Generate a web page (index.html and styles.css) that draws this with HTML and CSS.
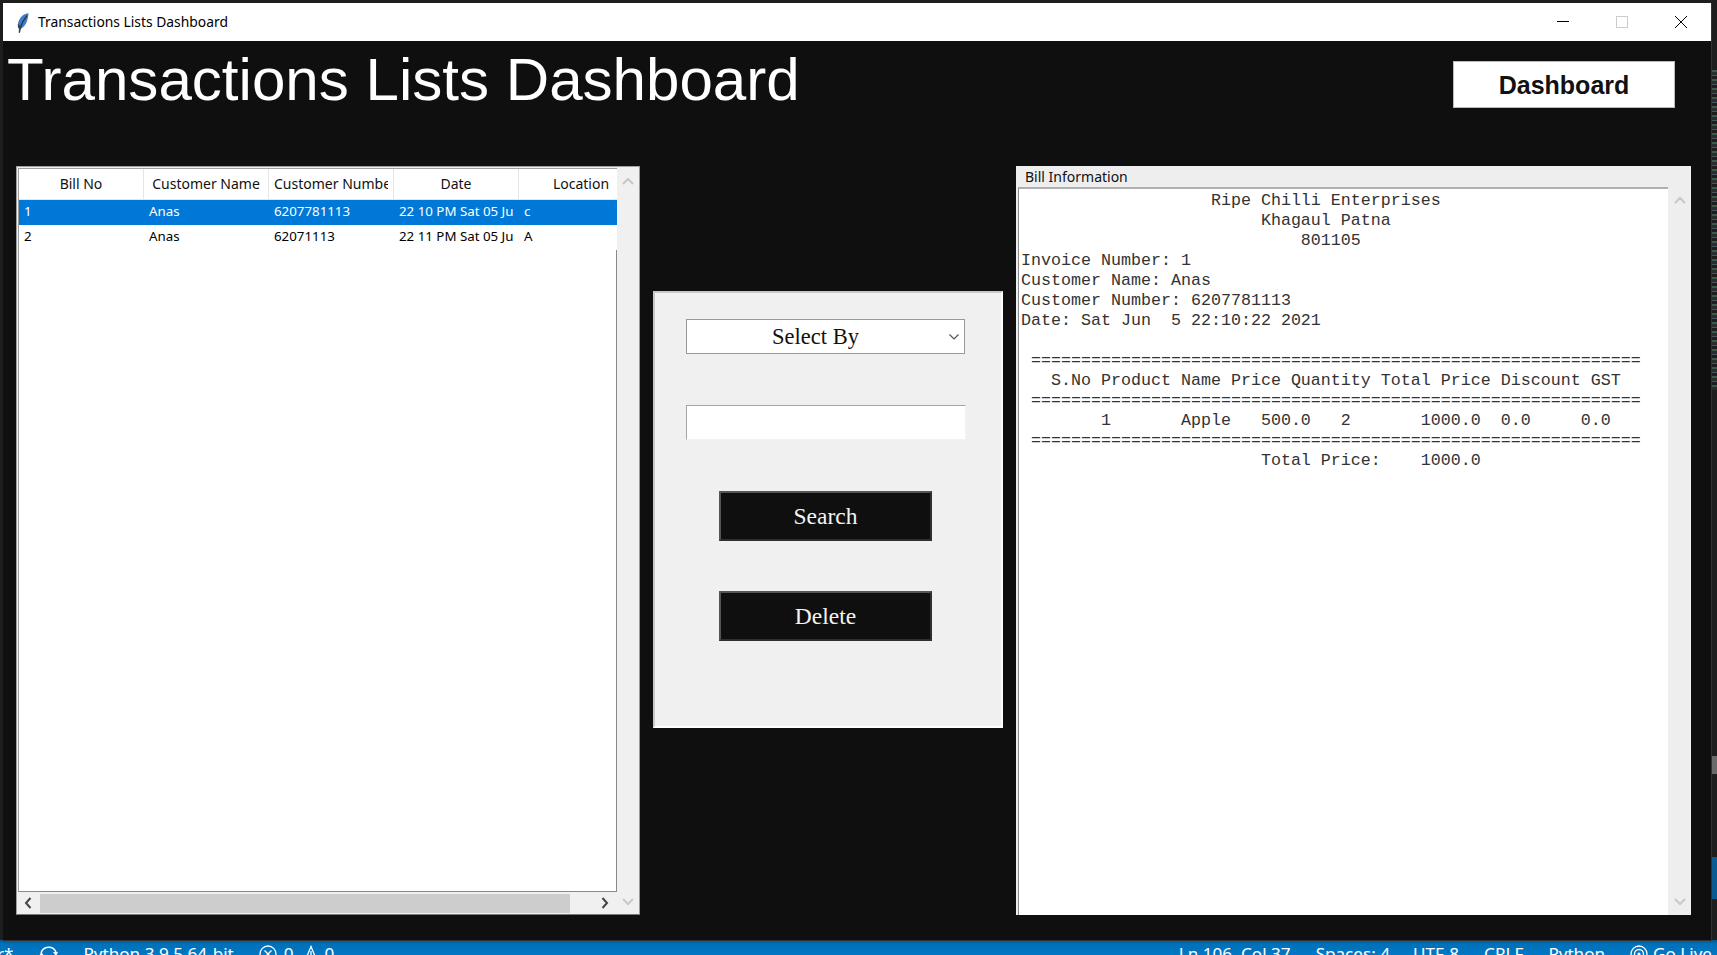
FILE: index.html
```html
<!DOCTYPE html>
<html lang="en">
<head>
<meta charset="utf-8">
<title>Transactions Lists Dashboard</title>
<link rel="stylesheet" href="styles.css">
</head>
<body>
<div class="desktop">
  <div class="minimap"></div>
  <div class="side-gray"></div>
  <div class="side-blue"></div>

  <footer class="statusbar">
    <div class="status-left">
      <span class="st-branch">r*</span>
      <svg class="st-sync" viewBox="0 0 21 21" width="21" height="21"><path d="M3 9a8 8 0 0 1 15 -1M18 14a8 8 0 0 1 -15 1" fill="none" stroke="#fff" stroke-width="1.5"/><path d="M1 12l5 0l-2.500 -4zM15 8l5 0l-2 4z" fill="#fff"/></svg>
      <span class="st-python">Python 3.9.5 64-bit</span>
      <svg class="st-err" viewBox="0 0 18 18" width="18" height="18"><circle cx="9" cy="9" r="8" fill="none" stroke="#fff" stroke-width="1.300"/><path d="M5.500 5.500l7 7M12.500 5.500l-7 7" stroke="#fff" stroke-width="1.300"/></svg>
      <span class="st-count">0</span>
      <svg class="st-warn" viewBox="0 0 14 18" width="14" height="18"><path d="M7 1.500L13 16H1z" fill="none" stroke="#fff" stroke-width="1.300"/><path d="M7 6v6" stroke="#fff" stroke-width="1.300"/></svg>
      <span class="st-count">0</span>
    </div>
    <div class="status-right">
      <span class="st-ln">Ln 106, Col 37</span>
      <span class="st-item">Spaces: 4</span>
      <span class="st-item st-utf">UTF-8</span>
      <span class="st-item">CRLF</span>
      <span class="st-item">Python</span>
      <svg class="st-live" viewBox="0 0 18 18" width="18" height="18"><circle cx="9" cy="9" r="8" fill="none" stroke="#fff" stroke-width="1.300"/><circle cx="9" cy="9" r="4.500" fill="none" stroke="#fff" stroke-width="1.300"/><circle cx="9" cy="9" r="1.500" fill="#fff"/></svg>
      <span class="st-golive">Go Live</span>
    </div>
  </footer>

  <div class="window">
    <header class="titlebar">
      <svg class="feather" viewBox="0 0 12 20" width="12" height="20"><path d="M11.500 0.300C6.500 0.800 2.200 4.500 1 10.500C0.600 12.800 0.900 14.500 2 15.700L1.800 19.800L3 19.800L3.600 15.800C8 14.500 11 8 11.500 0.300Z" fill="#3f7cc4"/><path d="M10 2.500C7 6 4.500 10.500 2.800 16" fill="none" stroke="#12233a" stroke-width="1.100"/><path d="M1 11C0.700 13 1 14.500 2 15.700L1.800 19.800L3 19.800L3.600 15.800L5 14z" fill="#39424e"/></svg>
      <span class="window-title">Transactions Lists Dashboard</span>
      <div class="controls">
        <svg class="ctl" viewBox="0 0 12 12" width="12" height="12"><path d="M0 5.500H12" stroke="#000" stroke-width="1"/></svg>
        <svg class="ctl" viewBox="0 0 12 12" width="12" height="12"><rect x="0.500" y="0.500" width="11" height="11" fill="none" stroke="#ccc"/></svg>
        <svg class="ctl" viewBox="0 0 12 12" width="12" height="12"><path d="M0 0L12 12M12 0L0 12" stroke="#000" stroke-width="1"/></svg>
      </div>
    </header>

    <main class="client">
      <section class="banner">
        <h1 class="heading">Transactions Lists Dashboard</h1>
        <button class="dash-btn" type="button">Dashboard</button>
      </section>

      <section class="panels">
        <div class="list-panel">
          <div class="tree">
            <div class="tree-row tree-head">
              <div class="th">Bill No</div>
              <div class="th">Customer Name</div>
              <div class="th">Customer Number</div>
              <div class="th">Date</div>
              <div class="th">Location</div>
            </div>
            <div class="tree-row tree-item selected">
              <div class="td">1</div>
              <div class="td">Anas</div>
              <div class="td">6207781113</div>
              <div class="td">22 10 PM Sat 05 Jun</div>
              <div class="td">c</div>
            </div>
            <div class="tree-row tree-item">
              <div class="td">2</div>
              <div class="td">Anas</div>
              <div class="td">62071113</div>
              <div class="td">22 11 PM Sat 05 Jun</div>
              <div class="td">A</div>
            </div>
            <div class="tree-fill"></div>
          </div>
          <div class="vscroll">
            <svg viewBox="0 0 12 8" width="12" height="8"><path d="M1 7L6 2L11 7" fill="none" stroke="#c8c8c8" stroke-width="2"/></svg>
            <svg viewBox="0 0 12 8" width="12" height="8"><path d="M1 1L6 6L11 1" fill="none" stroke="#c8c8c8" stroke-width="2"/></svg>
          </div>
          <div class="hscroll">
            <svg class="h-arrow" viewBox="0 0 8 12" width="8" height="12"><path d="M6.500 1L2 6L6.500 11" fill="none" stroke="#444" stroke-width="2"/></svg>
            <div class="h-thumb"></div>
            <svg class="h-arrow" viewBox="0 0 8 12" width="8" height="12"><path d="M1.500 1L6 6L1.500 11" fill="none" stroke="#444" stroke-width="2"/></svg>
          </div>
        </div>

        <div class="search-panel">
          <div class="select-box">
            <span class="select-label">Select By</span>
            <svg class="chevron" viewBox="0 0 10 6" width="10" height="6"><path d="M0.500 0.500L5 5L9.500 0.500" fill="none" stroke="#555" stroke-width="1.200"/></svg>
          </div>
          <input class="search-input" type="text" aria-label="Search value">
          <button class="dark-btn search-btn" type="button">Search</button>
          <button class="dark-btn delete-btn" type="button">Delete</button>
        </div>

        <div class="bill-panel">
          <div class="bill-label">Bill Information</div>
          <pre class="bill-text">                   Ripe Chilli Enterprises
                        Khagaul Patna
                            801105
Invoice Number: 1
Customer Name: Anas
Customer Number: 6207781113
Date: Sat Jun  5 22:10:22 2021

 =============================================================
   S.No Product Name Price Quantity Total Price Discount GST
 =============================================================
        1       Apple   500.0   2       1000.0  0.0     0.0
 =============================================================
                        Total Price:    1000.0</pre>
          <div class="bill-scroll">
            <svg viewBox="0 0 12 8" width="12" height="8"><path d="M1 7L6 2L11 7" fill="none" stroke="#c8c8c8" stroke-width="2"/></svg>
            <svg viewBox="0 0 12 8" width="12" height="8"><path d="M1 1L6 6L11 1" fill="none" stroke="#c8c8c8" stroke-width="2"/></svg>
          </div>
        </div>
      </section>
    </main>
  </div>
</div>
</body>
</html>
```
FILE: styles.css
```css
* { box-sizing: border-box; }
html, body { margin: 0; padding: 0; }
body { background: #1e1e1e; overflow: hidden; }

.desktop {
  position: relative;
  width: 1717px;
  height: 955px;
  overflow: hidden;
  background: #1e1e1e;
}
.minimap {
  position: absolute;
  left: 1712px;
  top: 70px;
  width: 5px;
  height: 320px;
  background: repeating-linear-gradient(180deg, #3c5a48 0 2px, #2a2d30 2px 5px, #4a5560 5px 6px, #1e1e1e 6px 9px);
}
.side-gray {
  position: absolute;
  left: 1712px;
  top: 756px;
  width: 5px;
  height: 18px;
  background: #6a6a6a;
}
.side-blue {
  position: absolute;
  left: 1712px;
  top: 857px;
  width: 5px;
  height: 42px;
  background: #0a5a94;
}

/* VS Code status bar behind the app window */
.statusbar {
  position: absolute;
  left: 0;
  right: 0;
  bottom: 0;
  height: 15px;
  overflow: hidden;
  display: flex;
  justify-content: space-between;
  background: linear-gradient(180deg, #01578f 0, #0170b8 4px, #0078c6 100%);
  color: #fff;
  font: 17.100px/22px "Noto Sans", sans-serif;
}
.status-left, .status-right {
  display: flex;
  align-items: flex-start;
  padding-top: 3px;
  white-space: nowrap;
}
.st-branch { margin-left: -3px; }
.st-sync { margin-left: 25px; margin-top: 1px; }
.st-python { margin-left: 24px; }
.st-err { margin-left: 25px; margin-top: 2px; }
.st-count { margin-left: 7px; }
.st-warn { margin-left: 10px; margin-top: 2px; }
.status-right { margin-right: 5px; }
.st-item { margin-left: 25px; }
.st-item.st-utf { margin-left: 23px; }
.st-live { margin-left: 25px; margin-top: 2px; }
.st-golive { margin-left: 5px; }

.window {
  position: absolute;
  left: 3px;
  top: 3px;
  width: 1709px;
  height: 938px;
  background: #0f0f0f;
  border-right: 1px solid #333;
  border-bottom: 1px solid #333;
  display: flex;
  flex-direction: column;
}
.titlebar {
  height: 38px;
  flex: none;
  background: #fff;
  display: flex;
  align-items: center;
  padding-left: 14px;
}
.feather { flex: none; margin-top: 2px; }
.window-title {
  margin-left: 9px;
  margin-bottom: 2px;
  font: 13.850px "Noto Sans", sans-serif;
  color: #000;
}
.controls {
  margin-left: auto;
  display: flex;
  gap: 47px;
  padding-right: 24px;
}
.ctl { display: block; }

.client { flex: 1; min-height: 0; display: flex; flex-direction: column; }
.banner {
  height: 125px;
  flex: none;
  display: flex;
  justify-content: space-between;
  align-items: flex-start;
  padding-right: 36px;
}
.heading {
  margin: 0;
  padding: 5px 0 0 4px;
  font: 400 60.100px/68px "Liberation Sans", Arial, sans-serif;
  color: #fff;
  white-space: nowrap;
}
.dash-btn {
  margin-top: 20px;
  width: 222px;
  height: 47px;
  padding: 2px 0 0;
  background: #fff;
  border: 1px solid #bbb;
  font: 700 25px "Liberation Sans", Arial, sans-serif;
  color: #111;
}

.panels {
  display: flex;
  align-items: flex-start;
  gap: 13px;
  padding-left: 13px;
}

/* Left list */
.list-panel {
  width: 624px;
  height: 749px;
  flex: none;
  display: grid;
  grid-template-columns: 599px 22px;
  grid-template-rows: 724px 22px;
  padding: 1px 0 0 1px;
  background: #f0f0f0;
  border: 1px solid #a0a0a0;
  border-bottom-color: #777;
  border-right-color: #999;
}
.tree {
  background: #fff;
  border-top: 1px solid #a0a0a0;
  border-left: 1px solid #a0a0a0;
  border-bottom: 1px solid #8a8a8a;
  display: flex;
  flex-direction: column;
  overflow: hidden;
  font: 14px "Noto Sans", sans-serif;
  color: #000;
}
.tree-row {
  display: grid;
  grid-template-columns: repeat(5, 125px);
  flex: none;
  width: 625px;
}
.tree-head {
  height: 31px;
  border-bottom: 1px solid #e5e5e5;
  background: repeating-linear-gradient(90deg, transparent 0 124px, #e5e5e5 124px 125px);
}
.th {
  overflow: hidden;
  white-space: nowrap;
  line-height: 30px;
  text-align: center;
  color: #111;
  padding-left: 5px;
  border-right: 6px solid transparent;
}
.tree-item { height: 25px; font-size: 13.300px; }
.td {
  overflow: hidden;
  white-space: nowrap;
  line-height: 23px;
  padding-left: 5px;
  border-right: 5px solid transparent;
}
.selected { background: #0078d7; color: #fff; }
.tree-fill { flex: 1; border-right: 1px solid #8a8a8a; }

.vscroll {
  grid-column: 2;
  grid-row: 1 / 3;
  display: flex;
  flex-direction: column;
  justify-content: space-between;
  align-items: center;
  padding: 9px 0 8px;
}
.hscroll {
  grid-column: 1;
  grid-row: 2;
  display: flex;
  align-items: center;
  padding-left: 6px;
  padding-right: 6px;
}
.h-arrow { flex: none; }
.h-thumb {
  width: 530px;
  height: 19px;
  margin: 0 31px 0 8px;
  background: #cdcdcd;
}

/* Middle panel */
.search-panel {
  width: 350px;
  height: 437px;
  flex: none;
  margin-top: 125px;
  padding-top: 26px;
  display: flex;
  flex-direction: column;
  align-items: flex-start;
  background: #f0f0f0;
  border: 2px solid #fff;
  border-top-color: #c8c8c8;
  border-left-color: #c8c8c8;
}
.select-box {
  width: 279px;
  height: 35px;
  margin-left: 31px;
  display: flex;
  align-items: center;
  background: #fff;
  border: 1px solid #999;
  position: relative;
}
.select-label {
  flex: 1;
  text-align: center;
  padding-right: 20px;
  font: 22.500px "Liberation Serif", "Times New Roman", serif;
  color: #111;
}
.chevron { position: absolute; right: 5px; top: 14px; }
.search-input {
  display: block;
  width: 280px;
  height: 35px;
  margin: 51px 0 0 31px;
  padding: 0;
  background: #fff;
  border: 1px solid #f2f2f2;
  border-top-color: #a5a5a5;
  border-left-color: #a5a5a5;
  outline: none;
}
.dark-btn {
  display: block;
  width: 213px;
  height: 50px;
  padding: 0;
  background: #0f0f0f;
  color: #f4f4f4;
  border: 2px solid #2f2f2f;
  border-top-color: #555;
  border-left-color: #555;
  font: 23.500px "Liberation Serif", "Times New Roman", serif;
}
.search-btn { margin: 51px 0 0 64px; }
.delete-btn { margin: 50px 0 0 64px; }

/* Right panel */
.bill-panel {
  width: 675px;
  height: 749px;
  flex: none;
  display: grid;
  grid-template-columns: 652px 23px;
  grid-template-rows: 21px 1fr;
  background: #eeeeee;
}
.bill-label {
  grid-column: 1 / 3;
  padding-left: 9px;
  font: 14px/21px "Noto Sans", sans-serif;
  color: #111;
}
.bill-text {
  margin: 0 0 0 2px;
  padding: 2px 0 0 2px;
  overflow: hidden;
  background: #fff;
  border-top: 2px solid #b0b0b0;
  border-left: 1px solid #8a8a8a;
  font: 16.660px/20px "Liberation Mono", "Courier New", monospace;
  color: #333;
}
.bill-scroll {
  display: flex;
  flex-direction: column;
  justify-content: space-between;
  align-items: center;
  padding: 9px 0 9px;
}
```
